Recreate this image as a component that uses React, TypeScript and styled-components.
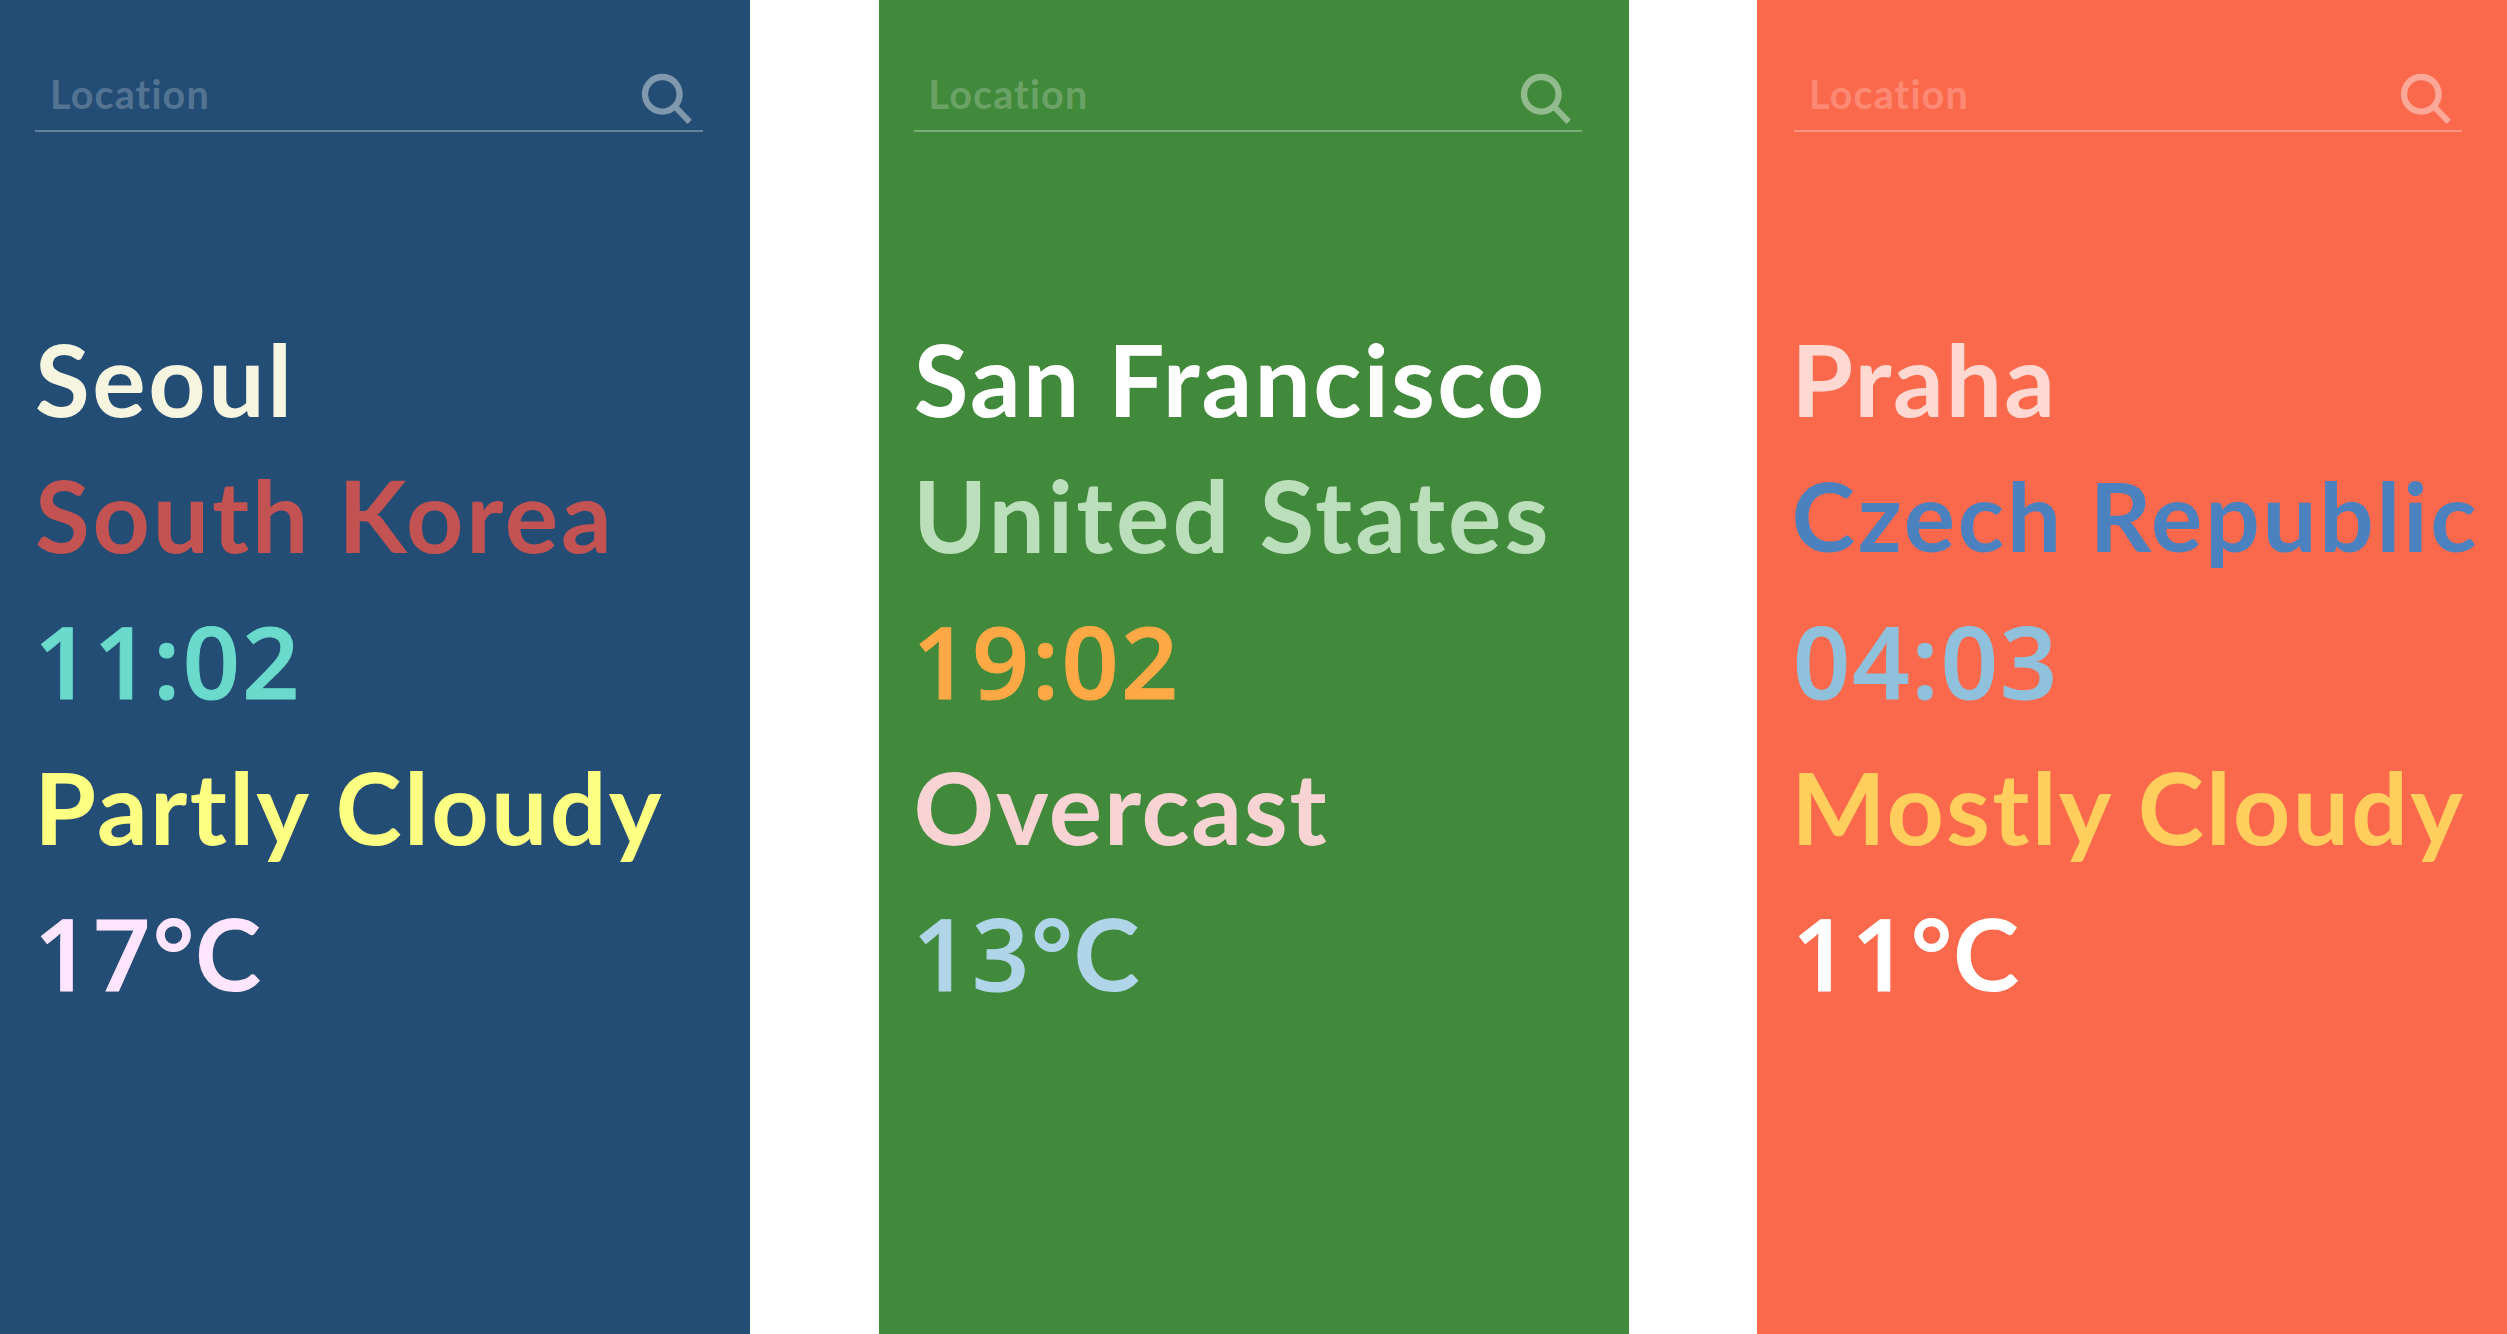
import React from 'react';
import styled, { createGlobalStyle } from 'styled-components';

const GlobalStyle = createGlobalStyle`
  * { box-sizing: border-box; }
  body { margin: 0; background: #ffffff; overflow: hidden; }
`;

const Board = styled.main`
  display: grid;
  grid-template-columns: 750px 750px 750px;
  justify-content: space-between;
  width: 2507px;
  height: 1334px;
  font-family: Lato, 'Open Sans', sans-serif;
  font-weight: 700;
`;

const Screen = styled.section<{ $bg: string }>`
  display: flex;
  flex-direction: column;
  height: 1334px;
  background: ${p => p.$bg};
`;

const SearchBar = styled.div<{ $shift: number }>`
  display: flex;
  align-items: flex-start;
  justify-content: space-between;
  width: 668px;
  height: 62px;
  margin: 70px 0 0 ${p => 35 + p.$shift}px;
  padding: 0 10px 0 15px;
  border-bottom: 2px solid rgba(255, 255, 255, 0.3);
`;

const Placeholder = styled.span`
  padding-top: 5px;
  font-size: 39.5px;
  line-height: 38px;
  letter-spacing: 1.15px;
  color: rgba(255, 255, 255, 0.24);
`;

const Glass = styled.svg`
  width: 52px;
  height: 56px;
  fill: none;
  stroke: #ffffff;
  opacity: 0.42;
`;

const Report = styled.div`
  display: flex;
  flex-direction: column;
  align-items: flex-start;
  margin-top: 186px;
`;

const Line = styled.div<{ $color: string; $left: number; $track: number; $size?: number; $gap?: number; $digits?: boolean }>`
  height: 120px;
  margin: 0 0 ${p => p.$gap ?? 26}px ${p => p.$left}px;
  padding-top: ${p => (p.$size ? 1 : 0)}px;
  font-family: ${p => (p.$digits ? "'Open Sans', sans-serif" : 'Lato, sans-serif')};
  font-weight: ${p => (p.$digits ? 600 : 700)};
  font-size: ${p => p.$size ?? 100}px;
  line-height: 120px;
  letter-spacing: ${p => p.$track}px;
  white-space: nowrap;
  color: ${p => p.$color};
  -webkit-text-stroke: ${p => (p.$digits ? 1 : 0)}px ${p => p.$color};
`;

const Unit = styled.span`
  font-family: Lato, sans-serif;
  font-weight: 700;
  letter-spacing: 0.8px;
  -webkit-text-stroke-width: 0;
`;

interface Item { text: string; color: string; left: number; track: number; size?: number }
interface Place {
  bg: string; shift: number; city: Item; country: Item; time: Item; sky: Item; temp: Item;
}

const places: Place[] = [
  {
    bg: '#234d74', shift: 0,
    city: { text: 'Seoul', color: '#f5f5e0', left: 35, track: 2.6 },
    country: { text: 'South Korea', color: '#c35252', left: 35, track: 2.8 },
    time: { text: '11:02', color: '#69dacb', left: 34, track: 2.3 },
    sky: { text: 'Partly Cloudy', color: '#fcff82', left: 34.3, track: 2.32 },
    temp: { text: '17', color: '#ffe5ff', left: 34, track: 2.2 },
  },
  {
    bg: '#41893b', shift: 0,
    city: { text: 'San Francisco', color: '#ffffff', left: 35.2, track: 2.18 },
    country: { text: 'United States', color: '#bbdfba', left: 34.4, track: 2.98 },
    time: { text: '19:02', color: '#ffa946', left: 34, track: 2.4 },
    sky: { text: 'Overcast', color: '#f8d3d3', left: 35, track: 1.7 },
    temp: { text: '13', color: '#b0d5e9', left: 34, track: 2.2 },
  },
  {
    bg: '#fb694d', shift: 2,
    city: { text: 'Praha', color: '#ffd9d1', left: 34.3, track: 2 },
    country: { text: 'Czech Republic', color: '#4b81bf', left: 34.6, track: 2.75, size: 96 },
    time: { text: '04:03', color: '#8fc0dc', left: 36, track: 2 },
    sky: { text: 'Mostly Cloudy', color: '#ffce5c', left: 34.3, track: 2.2 },
    temp: { text: '11', color: '#ffffff', left: 35, track: 2.2 },
  },
];

const SearchIcon = () => (
  <Glass viewBox="0 0 52 56">
    <circle cx="21.3" cy="24.3" r="17.3" strokeWidth="6.3" />
    <path d="M33.8 36.4 48.7 51.8" strokeWidth="6" />
  </Glass>
);

const WeatherScreen = ({ place }: { place: Place }) => {
  const { city, country, time, sky, temp } = place;
  return (
    <Screen $bg={place.bg}>
      <SearchBar $shift={place.shift}>
        <Placeholder>Location</Placeholder>
        <SearchIcon />
      </SearchBar>
      <Report>
        <Line $color={city.color} $left={city.left} $track={city.track} $gap={16}>{city.text}</Line>
        <Line $color={country.color} $left={country.left} $track={country.track} $size={country.size}>{country.text}</Line>
        <Line $color={time.color} $left={time.left} $track={time.track} $digits>{time.text}</Line>
        <Line $color={sky.color} $left={sky.left} $track={sky.track}>{sky.text}</Line>
        <Line $color={temp.color} $left={temp.left} $track={temp.track} $digits>
          {temp.text}<Unit>°C</Unit>
        </Line>
      </Report>
    </Screen>
  );
};

export default function App() {
  return (
    <>
      <GlobalStyle />
      <Board>
        {places.map(place => <WeatherScreen key={place.city.text} place={place} />)}
      </Board>
    </>
  );
}
